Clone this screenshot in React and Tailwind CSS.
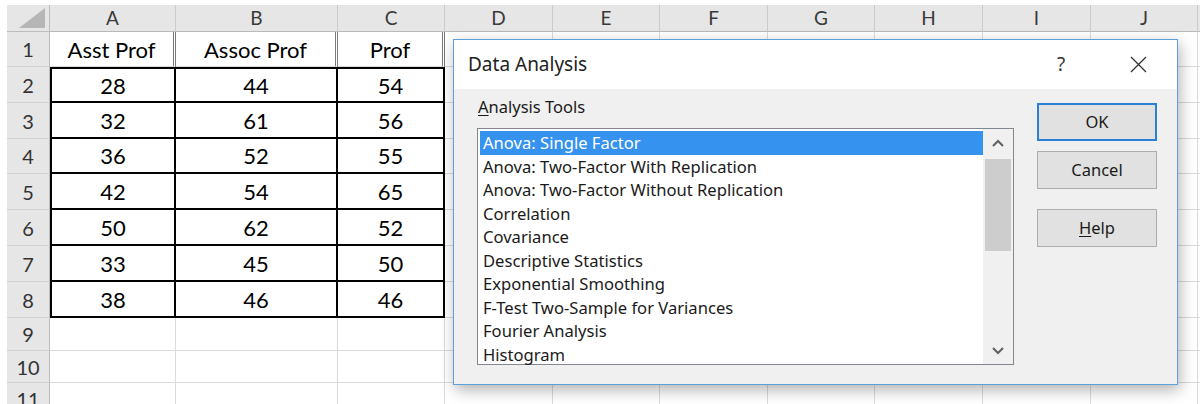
import React from 'react';

// Spreadsheet columns (x positions read off the screenshot)
const columns = [
  { key: 'A', w: 'w-[126px]' },
  { key: 'B', w: 'w-[162px]' },
  { key: 'C', w: 'w-[107px]' },
  { key: 'D', w: 'w-[108px]' },
  { key: 'E', w: 'w-[107px]' },
  { key: 'F', w: 'w-[108px]' },
  { key: 'G', w: 'w-[107px]' },
  { key: 'H', w: 'w-[108px]' },
  { key: 'I', w: 'w-[108px]' },
  { key: 'J', w: 'w-[107px]' },
];

const rowHeights = [
  'h-[35px]', 'h-[36px]', 'h-[36px]', 'h-[35px]', 'h-[36px]', 'h-[36px]',
  'h-[36px]', 'h-[36px]', 'h-[33px]', 'h-[32px]', 'h-[32px]',
];

const data = [
  ['Asst Prof', 'Assoc Prof', 'Prof'],
  ['28', '44', '54'],
  ['32', '61', '56'],
  ['36', '52', '55'],
  ['42', '54', '65'],
  ['50', '62', '52'],
  ['33', '45', '50'],
  ['38', '46', '46'],
];

const tools = [
  'Anova: Single Factor',
  'Anova: Two-Factor With Replication',
  'Anova: Two-Factor Without Replication',
  'Correlation',
  'Covariance',
  'Descriptive Statistics',
  'Exponential Smoothing',
  'F-Test Two-Sample for Variances',
  'Fourier Analysis',
  'Histogram',
];

const cellBorder = (r, c) => {
  if (c > 2 || r > 7) return 'border-r border-b border-[#dadada]';
  if (r === 0) return 'border-r-[3px] border-double border-r-[#7a7a7a] border-b border-b-[#dadada]';
  let cls = 'border-r-2 border-b-2 border-black';
  if (r === 1) cls += ' border-t-2';
  if (c === 0) cls += ' border-l-2';
  return cls;
};

const Grid = () => (
  <div className="font-['Lato',sans-serif]">
    {/* column header row */}
    <div className="flex h-[27px] pl-[7px]">
      <div className="w-[43px] bg-[#e6e6e6] border-r border-b border-[#bdbdbd] flex items-end justify-end pr-[4px] pb-[3px]">
        <svg width="26" height="20" viewBox="0 0 26 20">
          <polygon points="26,0 26,20 0,20" fill="#b6b6b6" />
        </svg>
      </div>
      {columns.map(col => (
        <div
          key={col.key}
          className={`${col.w} shrink-0 bg-[#e6e6e6] border-r border-r-[#cbcbcb] border-b border-b-[#b9b9b9] flex items-center justify-center text-[19px] text-[#3a3a3a]`}
        >
          {col.key}
        </div>
      ))}
      <div className="flex-1 bg-[#e6e6e6] border-b border-b-[#b9b9b9]" />
    </div>

    {rowHeights.map((h, r) => (
      <div key={r} className={`flex ${h} pl-[7px]`}>
        <div className="w-[43px] shrink-0 bg-[#e6e6e6] border-r border-r-[#bcbcbc] border-b border-b-[#d2d2d2] flex items-center justify-center text-[20px] text-[#333]">
          {r + 1}
        </div>
        {columns.map((col, c) => (
          <div
            key={col.key}
            className={`${col.w} shrink-0 ${cellBorder(r, c)} flex items-center justify-center text-[22px] text-black`}
          >
            {data[r] && c < 3 ? data[r][c] : ''}
          </div>
        ))}
        <div className="flex-1 border-b border-[#dadada]" />
      </div>
    ))}
  </div>
);

const Chevron = ({ up }) => (
  <svg width="12" height="8" viewBox="0 0 12 8">
    <polyline
      points={up ? '1,7 6,2 11,7' : '1,1 6,6 11,1'}
      fill="none"
      stroke="#606060"
      strokeWidth="2"
    />
  </svg>
);

const Button = ({ children, primary, className = '' }) => (
  <div
    className={`h-[38px] flex items-center justify-center bg-[#e1e1e1] text-[16.5px] text-[#1a1a1a] ${
      primary ? 'h-[37px] border-2 border-[#2b7fd4]' : 'border border-[#adadad]'
    } ${className}`}
  >
    {children}
  </div>
);

const Dialog = () => (
  <div className="absolute left-[453px] top-[39px] w-[725px] h-[346px] border border-[#5d9edc] bg-[#f0f0f0] shadow-[2px_5px_14px_rgba(0,0,0,0.3)] font-['Noto_Sans',sans-serif] text-[#1a1a1a]">
    {/* title bar */}
    <div className="h-[49px] bg-white flex items-center pl-[14px] pr-[24px]">
      <span className="flex-1 text-[19px] text-[#222]">Data Analysis</span>
      <span className="w-[30px] text-center text-[19px] text-[#333]">?</span>
      <div className="w-[30px] ml-[47px] flex justify-center">
        <svg width="17" height="17" viewBox="0 0 17 17">
          <path d="M1 1 L16 16 M16 1 L1 16" stroke="#333" strokeWidth="1.3" />
        </svg>
      </div>
    </div>

    {/* body */}
    <div className="flex pl-[23px] pt-[7px]">
      <div className="w-[537px]">
        <div className="h-[22px] leading-[22px] text-[16.5px] mb-[10px] pl-[1px]">
          <span className="underline underline-offset-2">A</span>nalysis Tools
        </div>
        <div className="h-[237px] border border-[#828790] bg-white flex">
          <div className="flex-1 pt-[2px] pl-[2px]">
            {tools.map((t, i) => (
              <div
                key={t}
                className={`h-[23.5px] leading-[23.5px] pl-[3px] text-[16.6px] whitespace-nowrap ${
                  i === 0 ? 'bg-[#3592ee] text-white' : 'text-[#1a1a1a]'
                }`}
              >
                {t}
              </div>
            ))}
          </div>
          <div className="w-[30px] bg-[#f0f0f0] flex flex-col">
            <div className="h-[27px] flex items-center justify-center">
              <Chevron up />
            </div>
            <div className="h-[92px] mt-[3px] mx-[2px] bg-[#cdcdcd]" />
            <div className="flex-1" />
            <div className="h-[27px] flex items-center justify-center">
              <Chevron />
            </div>
          </div>
        </div>
      </div>

      <div className="ml-[23px] mt-[7px] w-[120px] flex flex-col">
        <Button primary>OK</Button>
        <Button className="mt-[10px]">Cancel</Button>
        <Button className="mt-[20px]">
          <span><span className="underline underline-offset-2">H</span>elp</span>
        </Button>
      </div>
    </div>
  </div>
);

export default function App() {
  return (
    <div className="relative w-[1200px] h-[404px] overflow-hidden bg-white">
      <div className="h-[5px]" />
      <Grid />
      <Dialog />
    </div>
  );
}
